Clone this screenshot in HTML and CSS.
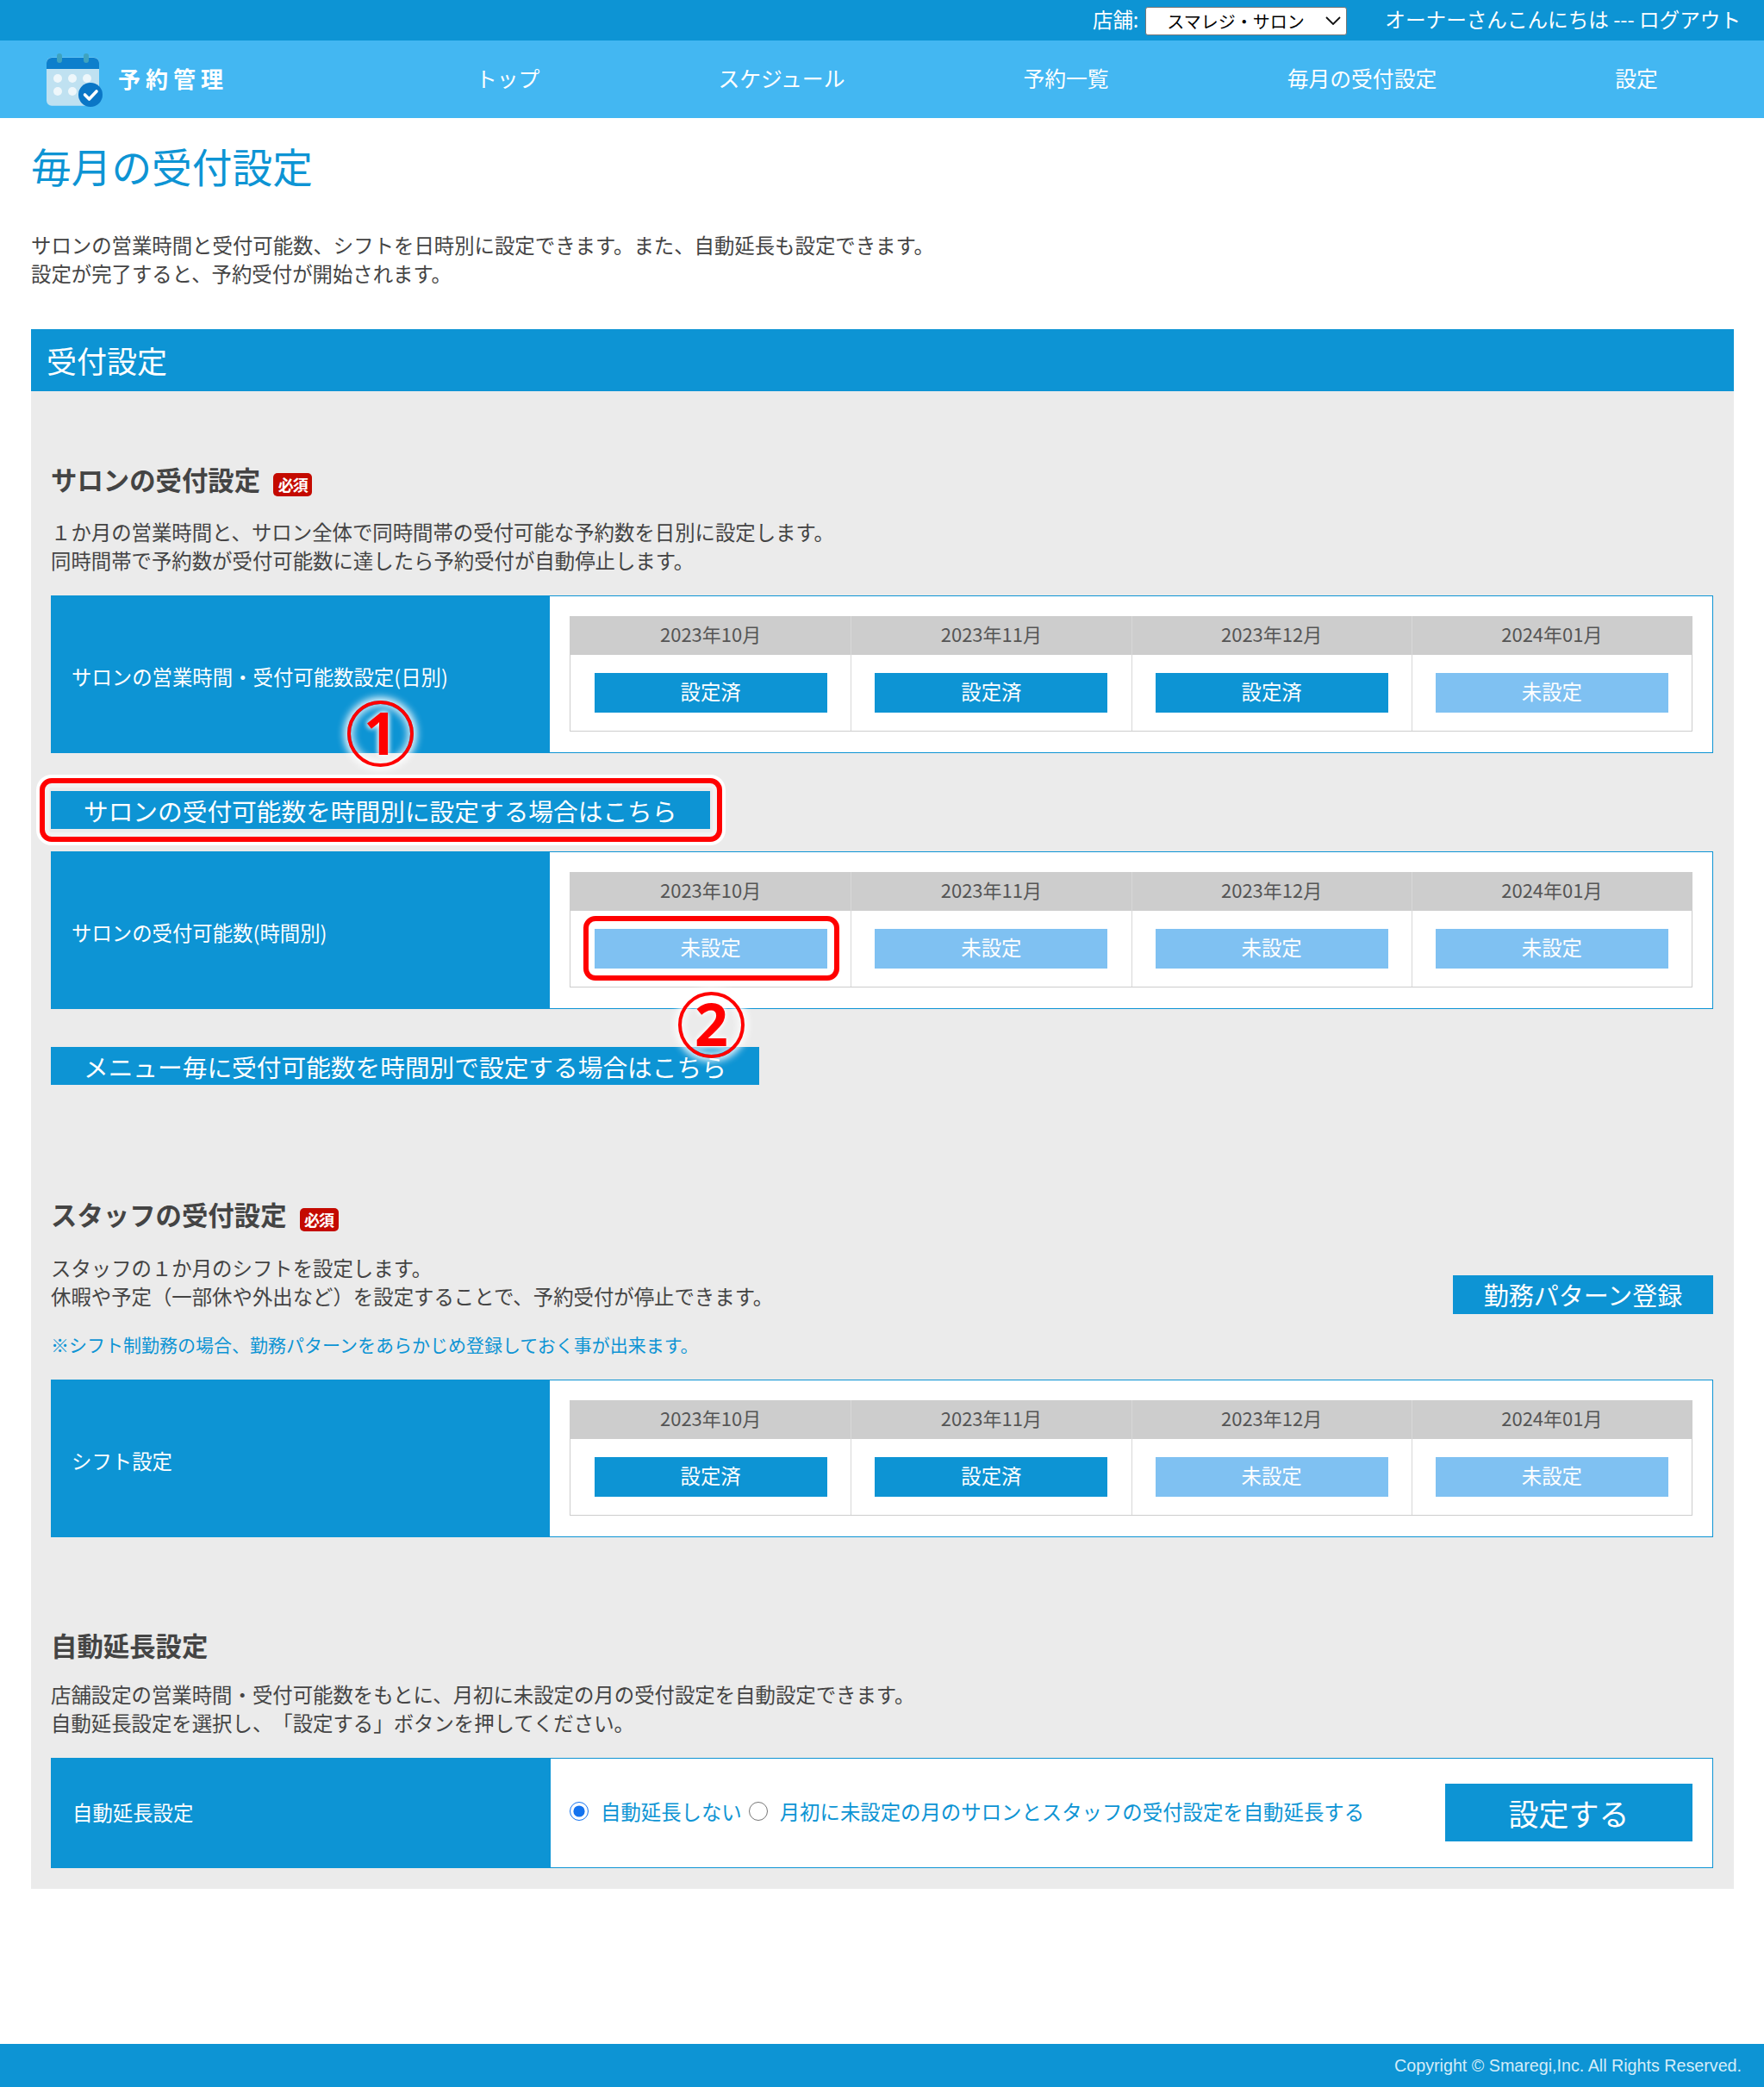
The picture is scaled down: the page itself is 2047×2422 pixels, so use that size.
FILE: index.html
```html
<!DOCTYPE html>
<html lang="ja">
<head>
<meta charset="utf-8">
<title>毎月の受付設定</title>
<link rel="stylesheet" href="styles.css">
</head>
<body>
<div class="topbar">
  <label class="store">店舗:</label>
  <div class="select-wrap">
    <select class="store-select"><option>スマレジ・サロン</option></select>
    <svg class="chevron" viewBox="0 0 18 10" width="18" height="10" aria-hidden="true"><path d="M1 1l8 8 8-8" fill="none" stroke="#111" stroke-width="1.800"/></svg>
  </div>
  <span class="greeting">オーナーさんこんにちは --- ログアウト</span>
</div>
<header class="header">
  <div class="brand">
    <svg class="brand-icon" viewBox="0 0 66 62" width="66" height="62" aria-hidden="true">
      <path d="M0 11a6 6 0 0 1 6-6h49a6 6 0 0 1 6 6v45a6 6 0 0 1-6 6H6a6 6 0 0 1-6-6z" fill="#bfe1f1" transform="translate(0 -5) scale(1 .98) translate(0 5)"/>
      <path d="M0 18V11a6 6 0 0 1 6-6h49a6 6 0 0 1 6 6v7z" fill="#0d7fcc"/>
      <rect x="12" y="0" width="6" height="11" rx="3" fill="#3fa3bf"/>
      <rect x="43" y="0" width="6" height="11" rx="3" fill="#3fa3bf"/>
      <g fill="#eef7fb">
        <circle cx="13" cy="29" r="5"/><circle cx="30" cy="29" r="5"/><circle cx="47" cy="29" r="5"/>
        <circle cx="13" cy="44" r="5"/><circle cx="30" cy="44" r="5"/>
      </g>
      <circle cx="51" cy="48" r="14" fill="#0a76c6"/>
      <path d="M44.5 48l5 5 8.500-9" fill="none" stroke="#fff" stroke-width="3.600" stroke-linecap="round" stroke-linejoin="round"/>
    </svg>
    <span class="brand-name">予約管理</span>
  </div>
  <nav class="nav">
    <a>トップ</a><a>スケジュール</a><a>予約一覧</a><a>毎月の受付設定</a><a>設定</a>
  </nav>
</header>
<main class="main">
  <h1 class="title">毎月の受付設定</h1>
  <p class="lead">サロンの営業時間と受付可能数、シフトを日時別に設定できます。また、自動延長も設定できます。<br>設定が完了すると、予約受付が開始されます。</p>
  <h2 class="section-bar">受付設定</h2>
  <section class="panel">
    <h3 class="heading first">サロンの受付設定<span class="badge">必須</span></h3>
    <p class="para">１か月の営業時間と、サロン全体で同時間帯の受付可能な予約数を日別に設定します。<br>同時間帯で予約数が受付可能数に達したら予約受付が自動停止します。</p>
    <div class="row row-first">
      <div class="row-label">サロンの営業時間・受付可能数設定(日別)</div>
      <div class="row-body">
        <div class="months">
          <div class="month"><div class="month-name">2023年10月</div><div class="month-cell"><a class="state done">設定済</a></div></div>
          <div class="month"><div class="month-name">2023年11月</div><div class="month-cell"><a class="state done">設定済</a></div></div>
          <div class="month"><div class="month-name">2023年12月</div><div class="month-cell"><a class="state done">設定済</a></div></div>
          <div class="month"><div class="month-name">2024年01月</div><div class="month-cell"><a class="state todo">未設定</a></div></div>
        </div>
      </div>
    </div>
    <a class="link-btn link-one">サロンの受付可能数を時間別に設定する場合はこちら</a>
    <div class="row row-second">
      <div class="row-label">サロンの受付可能数(時間別)</div>
      <div class="row-body">
        <div class="months">
          <div class="month"><div class="month-name">2023年10月</div><div class="month-cell"><a class="state todo">未設定</a></div></div>
          <div class="month"><div class="month-name">2023年11月</div><div class="month-cell"><a class="state todo">未設定</a></div></div>
          <div class="month"><div class="month-name">2023年12月</div><div class="month-cell"><a class="state todo">未設定</a></div></div>
          <div class="month"><div class="month-name">2024年01月</div><div class="month-cell"><a class="state todo">未設定</a></div></div>
        </div>
      </div>
    </div>
    <a class="link-btn link-two">メニュー毎に受付可能数を時間別で設定する場合はこちら</a>

    <h3 class="heading staff">スタッフの受付設定<span class="badge">必須</span></h3>
    <div class="staff-intro">
      <div>
        <p class="para">スタッフの１か月のシフトを設定します。<br>休暇や予定（一部休や外出など）を設定することで、予約受付が停止できます。</p>
        <p class="note">※シフト制勤務の場合、勤務パターンをあらかじめ登録しておく事が出来ます。</p>
      </div>
      <a class="pattern-btn">勤務パターン登録</a>
    </div>
    <div class="row row-staff">
      <div class="row-label">シフト設定</div>
      <div class="row-body">
        <div class="months">
          <div class="month"><div class="month-name">2023年10月</div><div class="month-cell"><a class="state done">設定済</a></div></div>
          <div class="month"><div class="month-name">2023年11月</div><div class="month-cell"><a class="state done">設定済</a></div></div>
          <div class="month"><div class="month-name">2023年12月</div><div class="month-cell"><a class="state todo">未設定</a></div></div>
          <div class="month"><div class="month-name">2024年01月</div><div class="month-cell"><a class="state todo">未設定</a></div></div>
        </div>
      </div>
    </div>

    <h3 class="heading auto">自動延長設定</h3>
    <p class="para auto-para">店舗設定の営業時間・受付可能数をもとに、月初に未設定の月の受付設定を自動設定できます。<br>自動延長設定を選択し、「設定する」ボタンを押してください。</p>
    <div class="row row-auto">
      <div class="row-label auto-label">自動延長設定</div>
      <div class="row-body auto-body">
        <label class="choice"><input type="radio" name="ext" checked>自動延長しない</label>
        <label class="choice"><input type="radio" name="ext">月初に未設定の月のサロンとスタッフの受付設定を自動延長する</label>
        <a class="submit">設定する</a>
      </div>
    </div>
  </section>
</main>
<footer class="footer">Copyright © Smaregi,Inc. All Rights Reserved.</footer>

<div class="callout box-one"></div>
<div class="callout box-two"></div>
<div class="mark mark-one">1</div>
<div class="mark mark-two">2</div>
</body>
</html>
```
FILE: styles.css
```css
* { box-sizing: border-box; }
html, body { margin: 0; padding: 0; }
body {
  position: relative;
  width: 2047px;
  height: 2422px;
  background: #fff;
  color: #444;
  font-family: "Noto Sans CJK JP", "Noto Sans", sans-serif;
  font-size: 23.400px;
  font-weight: 400;
  line-height: 33px;
  text-spacing-trim: space-all;
}
a { color: inherit; text-decoration: none; }
p, h1, h2, h3 { margin: 0; }

.topbar {
  height: 47px;
  background: #0d94d4;
  color: #fff;
  display: flex;
  align-items: center;
  justify-content: flex-end;
  padding-right: 27px;
}
.store { font-size: 23.400px; margin-right: 8px; padding-bottom: 3px; }
.select-wrap { position: relative; width: 234px; height: 33px; margin-right: 44px; }
.store-select {
  appearance: none;
  width: 100%;
  height: 100%;
  font-family: inherit;
  font-size: 20px;
  padding-left: 24px;
  background-color: #fff;
  color: #000;
  border: 1px solid #767676;
  border-radius: 3px;
}
.chevron { position: absolute; right: 7px; top: 12px; pointer-events: none; }
.greeting { font-size: 23.600px; padding-bottom: 3px; }

.header {
  height: 90px;
  background: #43b7f2;
  color: #fff;
  display: flex;
  align-items: center;
  padding-left: 54px;
}
.brand { display: flex; align-items: center; width: 498px; }
.brand-icon { display: block; margin-top: 2px; }
.brand-name {
  margin-left: 17px;
  padding-bottom: 3px;
  font-size: 26px;
  font-weight: 700;
  letter-spacing: 6px;
}
.nav { display: flex; gap: 207px; padding-bottom: 3px; font-size: 24.800px; }

.main { padding: 0 35px 0 36px; }
.title {
  margin-top: 30px;
  font-size: 46.700px;
  line-height: 50px;
  font-weight: 400;
  color: #0d94d4;
}
.lead { margin-top: 51px; }
.section-bar {
  margin-top: 48px;
  height: 72px;
  padding-left: 18px;
  background: #0d94d4;
  color: #fff;
  font-size: 35px;
  font-weight: 400;
  line-height: 72px;
}
.panel {
  height: 1738px;
  padding: 82px 24px 24px 23px;
  background: #ebebeb;
}
.heading {
  font-size: 30.400px;
  line-height: 40px;
  font-weight: 700;
  display: flex;
  align-items: center;
}
.heading.staff { margin-top: 130px; }
.heading.auto { margin-top: 105px; }
.badge {
  width: 45px;
  height: 27px;
  margin: 12px 0 0 15px;
  border-radius: 5px;
  background: #c40a00;
  color: #fff;
  font-size: 18px;
  line-height: 27px;
  letter-spacing: -1px;
  text-align: center;
}
.para { margin-top: 24.500px; }
.auto-para { margin-top: 20.500px; }
.staff-intro { display: flex; justify-content: space-between; align-items: flex-start; margin-top: 1px; }
.note { margin-top: 24px; font-size: 21px; line-height: 30px; color: #0d94d4; }
.pattern-btn {
  width: 302px;
  height: 45px;
  margin-top: 50px;
  background: #0d94d4;
  color: #fff;
  font-size: 29px;
  line-height: 45px;
  text-align: center;
}

.row { display: flex; height: 183px; margin-top: 24.500px; }
.row-staff { margin-top: 26.500px; }
.row-second { margin-top: 26px; }
.row-auto { height: 128px; margin-top: 24px; }
.row-label {
  width: 579px;
  flex: none;
  padding: 5px 0 0 24px;
  display: flex;
  align-items: center;
  background: #0d94d4;
  color: #fff;
  font-size: 23.400px;
}
.auto-label { width: 580px; padding: 0 0 0 25px; }
.row-body {
  flex: 1;
  padding: 23px 23px 0 23px;
  background: #fff;
  border: 1px solid #0d94d4;
  border-left: 0;
}
.months {
  display: grid;
  grid-template-columns: repeat(4, 1fr);
  height: 134px;
  border: 1px solid #cdcdcd;
  border-top: 0;
}
.month + .month { border-left: 1px solid #d8d8d8; }
.month-name {
  height: 45px;
  background: #cdcdcd;
  color: #555;
  font-size: 22px;
  line-height: 41px;
  text-align: center;
}
.month-cell { display: flex; justify-content: center; padding-top: 21px; }
.state {
  width: 270px;
  height: 46px;
  color: #fff;
  font-size: 23.400px;
  line-height: 43px;
  text-align: center;
}
.done { background: #0d94d4; }
.todo { background: #7fc1f2; }

.link-btn {
  display: block;
  width: fit-content;
  height: 44px;
  margin-top: 44px;
  padding: 0 38px;
  background: #0d94d4;
  color: #fff;
  font-size: 28.700px;
  line-height: 46px;
}

.auto-body { display: flex; align-items: center; padding: 0 23px 0 0; color: #0d94d4; font-size: 23.400px; }
.choice { display: flex; align-items: center; margin-right: 8px; margin-top: -3px; }
.choice input {
  width: 22px;
  height: 22px;
  margin: 0 14px 0 22px;
  accent-color: #1473ef;
}
.choice + .choice input { margin-left: 0; }
.submit {
  width: 287px;
  height: 67px;
  margin-left: auto;
  background: #0d94d4;
  color: #fff;
  font-size: 35px;
  line-height: 68px;
  text-align: center;
}

.footer {
  height: 50px;
  margin-top: 180px;
  padding-right: 26px;
  background: #0d94d4;
  color: #d4ecf8;
  font-family: "Liberation Sans", sans-serif;
  font-size: 19.700px;
  line-height: 50px;
  text-align: right;
}

.callout {
  position: absolute;
  border: 6px solid #f00;
  border-radius: 14px;
  box-shadow: 0 0 0 4px #fff, inset 0 0 0 5px rgba(255, 255, 255, .35);
}
.box-one { left: 46px; top: 903px; width: 792px; height: 74px; }
.box-two { left: 677px; top: 1063px; width: 297px; height: 75px; }
.mark {
  position: absolute;
  width: 77px;
  height: 77px;
  border: 4px solid #f00;
  border-radius: 50%;
  color: #f00;
  font-family: "Noto Sans", sans-serif;
  font-size: 68px;
  font-weight: 700;
  line-height: 66px;
  text-align: center;
  box-shadow: 0 0 8px 4px rgba(255, 255, 255, .9), inset 0 0 8px 3px rgba(255, 255, 255, .8);
  text-shadow: 0 0 6px #fff, 0 0 6px #fff;
}
.mark-one { left: 403px; top: 813px; }
.mark-two { left: 787px; top: 1151px; }
```
